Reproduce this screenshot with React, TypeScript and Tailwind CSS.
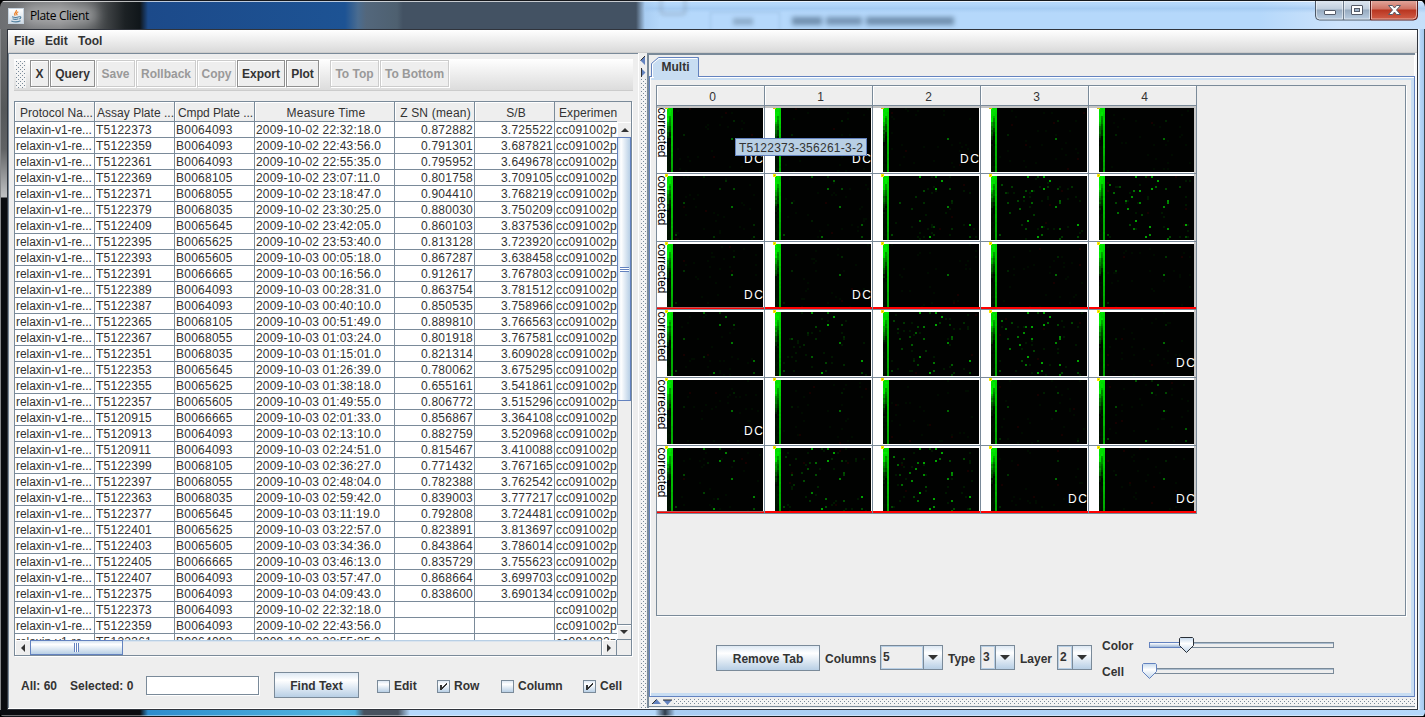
import React from "react";

const ROWS: [string, string, string, string, string][] = [
  ["T5122373", "B0064093", "2009-10-02 22:32:18.0", "0.872882", "3.725522"],
  ["T5122359", "B0064093", "2009-10-02 22:43:56.0", "0.791301", "3.687821"],
  ["T5122361", "B0064093", "2009-10-02 22:55:35.0", "0.795952", "3.649678"],
  ["T5122369", "B0068105", "2009-10-02 23:07:11.0", "0.801758", "3.709105"],
  ["T5122371", "B0068055", "2009-10-02 23:18:47.0", "0.904410", "3.768219"],
  ["T5122379", "B0068035", "2009-10-02 23:30:25.0", "0.880030", "3.750209"],
  ["T5122409", "B0065645", "2009-10-02 23:42:05.0", "0.860103", "3.837536"],
  ["T5122395", "B0065625", "2009-10-02 23:53:40.0", "0.813128", "3.723920"],
  ["T5122393", "B0065605", "2009-10-03 00:05:18.0", "0.867287", "3.638458"],
  ["T5122391", "B0066665", "2009-10-03 00:16:56.0", "0.912617", "3.767803"],
  ["T5122389", "B0064093", "2009-10-03 00:28:31.0", "0.863754", "3.781512"],
  ["T5122387", "B0064093", "2009-10-03 00:40:10.0", "0.850535", "3.758966"],
  ["T5122365", "B0068105", "2009-10-03 00:51:49.0", "0.889810", "3.766563"],
  ["T5122367", "B0068055", "2009-10-03 01:03:24.0", "0.801918", "3.767581"],
  ["T5122351", "B0068035", "2009-10-03 01:15:01.0", "0.821314", "3.609028"],
  ["T5122353", "B0065645", "2009-10-03 01:26:39.0", "0.780062", "3.675295"],
  ["T5122355", "B0065625", "2009-10-03 01:38:18.0", "0.655161", "3.541861"],
  ["T5122357", "B0065605", "2009-10-03 01:49:55.0", "0.806772", "3.515296"],
  ["T5120915", "B0066665", "2009-10-03 02:01:33.0", "0.856867", "3.364108"],
  ["T5120913", "B0064093", "2009-10-03 02:13:10.0", "0.882759", "3.520968"],
  ["T5120911", "B0064093", "2009-10-03 02:24:51.0", "0.815467", "3.410088"],
  ["T5122399", "B0068105", "2009-10-03 02:36:27.0", "0.771432", "3.767165"],
  ["T5122397", "B0068055", "2009-10-03 02:48:04.0", "0.782388", "3.762542"],
  ["T5122363", "B0068035", "2009-10-03 02:59:42.0", "0.839003", "3.777217"],
  ["T5122377", "B0065645", "2009-10-03 03:11:19.0", "0.792808", "3.724481"],
  ["T5122401", "B0065625", "2009-10-03 03:22:57.0", "0.823891", "3.813697"],
  ["T5122403", "B0065605", "2009-10-03 03:34:36.0", "0.843864", "3.786014"],
  ["T5122405", "B0066665", "2009-10-03 03:46:13.0", "0.835729", "3.755623"],
  ["T5122407", "B0064093", "2009-10-03 03:57:47.0", "0.868664", "3.699703"],
  ["T5122375", "B0064093", "2009-10-03 04:09:43.0", "0.838600", "3.690134"],
  ["T5122373", "B0064093", "2009-10-02 22:32:18.0", "", ""],
  ["T5122359", "B0064093", "2009-10-02 22:43:56.0", "", ""],
  ["T5122361", "B0064093", "2009-10-02 22:55:35.0", "", ""],
];

const HEADERS: [string, string][] = [
  ["Protocol Na...", "w-[80px] pl-[5px] tracking-[0.02px]"],
  ["Assay Plate ...", "w-[80px] pl-[2px] tracking-[0.02px]"],
  ["Cmpd Plate ...", "w-[80px] pl-[3px] tracking-[-0.08px]"],
  ["Measure Time", "w-[140px] justify-center pl-[3px] tracking-[0.25px]"],
  ["Z SN (mean)", "w-[80px] justify-center pl-[2px] tracking-[0.18px]"],
  ["S/B", "w-[80px] justify-center pl-[3px]"],
];

// well column, well row, plate activity above which the well lights up
const WELLS: [number, number, number][] = [
  [32, 15, -0.6], [29, 2, 0.15], [26, 6, 0.12], [43, 24, 0.15], [23, 30, 0.12], [18, 0, 0.18], [26, 0, 0.35],
  [8, 13, 0.0], [33, 6, 0.0], [4, 29, 0.05], [43, 30, 0.1], [5, 4, 0.7], [7, 8, 0.75], [9, 18, 0.72],
  [10, 5, 0.75], [13, 12, 0.7], [14, 16, 0.6], [16, 10, 0.6], [17, 7, 0.7], [20, 7, 0.5], [20, 13, 0.6],
  [18, 22, 0.4], [15, 24, 0.78], [17, 26, 0.7], [21, 19, 0.75], [25, 25, 0.5], [25, 29, 0.6], [23, 0, 0.7],
  [28, 5, 0.75], [34, 12, 0.6], [34, 13, 0.65], [34, 26, 0.6], [34, 31, 0.72], [35, 30, 0.78], [40, 5, 0.78],
];

// wells whose signal stays weak even on very active plates
const WEAK = new Set(["8-13", "33-6", "4-29", "43-30", "10-5", "15-24", "21-19", "40-5", "35-30", "23-0"]);

const ACTIVITY: number[][] = [
  [0.05, 0.03, 0, 0.04, 0.04],
  [0.22, 0.42, 0.68, 0.88, 1.05],
  [0.1, 0.06, 0, 0.05, 0.1],
  [0.48, 0.66, 0.86, 1.05, 0.03],
  [0.04, 0.02, 0, 0.14, 0.4],
  [0.55, 0.8, 1.05, 0.1, 0.03],
];

const CONTROL_LABELS = new Set(["0-0", "0-1", "0-2", "2-0", "2-1", "3-4", "4-0", "5-3", "5-4"]);

function random(seed: number) {
  let s = seed * 7919 + 17;
  return () => {
    s = (s * 1103515245 + 12345) % 2147483648;
    return s / 2147483648;
  };
}

function Plate({ row, col }: { row: number; col: number }) {
  const rnd = random(row * 5 + col + 1);
  const level = ACTIVITY[row][col];
  const shapes: React.ReactElement[] = [];
  for (let i = 0; i < 30; i++) {
    const x = 4 + Math.floor(rnd() * 43);
    const y = Math.floor(rnd() * 32);
    const red = rnd() > 0.88;
    shapes.push(<rect key={"n" + i} x={x} y={y} width="1" height="1" fill={red ? "#160000" : level > 0.6 ? "#001800" : "#000c00"} />);
  }
  WELLS.forEach(([x, y, t], i) => {
    if (level <= t) return;
    const cap = WEAK.has(`${x}-${y}`) ? 70 : 165;
    const g = i === 0 ? 105 + level * 30 : Math.min(cap, 25 + (level - t) * 260);
    shapes.push(<rect key={"w" + i} x={x} y={y} width="1" height="1" fill={`rgb(0,${Math.round(g)},0)`} />);
  });
  for (let y = 0; y < 32; y++) {
    const fade = Math.max(0, 1 - Math.max(0, y - 5) / 12);
    const a = y < 7 ? 215 + rnd() * 25 : fade * 200 + rnd() * 50 - 15;
    const b = y < 4 ? 215 + rnd() * 20 : Math.max(0, 1 - (y - 3) / 12) * 170 + rnd() * 35 - 10;
    const c = 215 - y * 1.8 + rnd() * 12;
    [a, b, c].forEach((v, x) => {
      const g = Math.max(8, Math.round(v));
      shapes.push(<rect key={`g${x}-${y}`} x={x} y={y} width="1" height="1" fill={`rgb(0,${y > 18 && x < 2 ? Math.round(12 + rnd() * 8) : g},0)`} />);
    });
  }
  const top = row === 0 ? "bg-[#c4c4c4]" : "bg-white";
  const section = row === 2 || row === 5;
  return (
    <div className="relative h-[67px] w-[107px] shrink-0 overflow-hidden bg-white">
      <div className={"h-[2px] " + top} />
      <div className="h-16 w-[106px] overflow-hidden pl-[10px]">
        <svg width="96" height="64" viewBox="0 0 48 32" shapeRendering="crispEdges">
          <rect width="48" height="32" fill="#010201" />
          {shapes}
        </svg>
      </div>
      <svg className="absolute left-0 top-0" width="107" height="67" shapeRendering="crispEdges">
        {row > 0 && <rect x="8.5" y="0.5" width="2" height="2" fill="#b8b000" stroke="#ffee00" />}
        {row === 0 && <rect x="8" y="2" width="3" height="1" fill="#e0c800" />}
        {col === 4 && <rect x="105" y="0" width="2" height="67" fill="#c8c8c8" />}
        {col === 0 && (
          <text transform="translate(0.5 1.5) rotate(90)" x="0" y="0" textLength="50" className="text-[12px]" fill="#000">corrected</text>
        )}
        {CONTROL_LABELS.has(`${row}-${col}`) && (
          <text x="87" y="57" textLength="19" className="text-[12px]" fill="#fff">DC</text>
        )}
        {section && <rect x="0" y="65" width="107" height="2" fill="#fe0000" />}
        {section && col === 0 && <rect x="0" y="65" width="107" height="1" fill="#c05050" />}
      </svg>
    </div>
  );
}

function Bumps({ id, className }: { id: string; className: string }) {
  return (
    <svg className={className} shapeRendering="crispEdges">
      <defs>
        <pattern id={id} width="4" height="4" patternUnits="userSpaceOnUse">
          <rect width="4" height="4" fill="#f4f4f4" />
          <rect x="0" y="0" width="1" height="1" fill="#7a8a99" />
          <rect x="2" y="2" width="1" height="1" fill="#7a8a99" />
        </pattern>
      </defs>
      <rect width="100%" height="100%" fill={`url(#${id})`} />
    </svg>
  );
}

function ToolButton({ label, size, disabled }: { label: string; size: string; disabled?: boolean }) {
  return (
    <div className={"flex h-[27px] shrink-0 items-center justify-center whitespace-nowrap border bg-[#eeeeee] pt-[2px] shadow-[1px_1px_0_#fff,inset_1px_1px_0_#fff] " + size + (disabled ? " border-[#cccccc] text-[#999999]" : " border-[#8f8f8f] text-[#333333]")}>
      {label}
    </div>
  );
}

function PushButton({ label, className }: { label: string; className: string }) {
  return (
    <div className={"flex shrink-0 items-center justify-center border border-[#7a8a99] bg-linear-to-b from-[#dde8f3] via-white via-30% to-[#b8cfe5] pt-[2px] " + className}>
      {label}
    </div>
  );
}

function Check({ label, checked, className }: { label: string; checked?: boolean; className: string }) {
  return (
    <div className={"flex shrink-0 items-center " + className}>
      <div className="size-[13px] border border-[#7a8a99] bg-linear-to-b from-[#dde8f3] via-white via-30% to-[#b8cfe5]">
        {checked && (
          <svg width="11" height="11" shapeRendering="crispEdges" fill="#333" className="block">
            <rect x="2" y="4" width="2" height="5" />
            <rect x="4" y="6" width="1" height="2" />
            <rect x="5" y="5" width="1" height="2" />
            <rect x="6" y="4" width="1" height="2" />
            <rect x="7" y="3" width="1" height="2" />
            <rect x="8" y="2" width="1" height="2" />
          </svg>
        )}
      </div>
      <span className="pl-[4px] pt-[1px]">{label}</span>
    </div>
  );
}

function Combo({ value, className }: { value: string; className: string }) {
  return (
    <div className={"flex h-[25px] shrink-0 border border-[#7a8a99] " + className}>
      <div className="flex flex-1 items-center border border-[#b8cfe5] pl-[1px]">{value}</div>
      <div className="flex w-[19px] items-center justify-center border-l border-[#7a8a99] bg-linear-to-b from-[#dde8f3] via-white via-30% to-[#b8cfe5]">
        <svg width="10" height="5" fill="#333"><path d="M0 0h10l-5 5z" /></svg>
      </div>
    </div>
  );
}

function Slider({ value, focused }: { value: number; focused?: boolean }) {
  return (
    <div className="relative h-[6px] w-[185px] border border-[#7a8a99] shadow-[inset_0_1px_0_#a9bccf]">
      {value > 0 && <div className="absolute -left-px -top-px h-[6px] border border-[#6382bf] bg-linear-to-b from-white to-[#9fb8d8]" style={{ width: value }} />}
      <svg className="absolute -top-[6px]" style={{ left: value - 8 }} width="16" height="17">
        <defs>
          <linearGradient id="thumb" x2="0" y2="1">
            <stop offset="0" stopColor="#c4d8ec" /><stop offset=".4" stopColor="#fff" /><stop offset="1" stopColor="#c0d5ea" />
          </linearGradient>
        </defs>
        <path d="M1.500 .5h12l1 1v7l-7 7-7-7v-7z" fill="url(#thumb)" stroke={focused ? "#2a2f36" : "#6382bf"} />
      </svg>
    </div>
  );
}

function TitleBar() {
  return (
    <div className="relative flex h-[29px] shrink-0 overflow-hidden border-t border-[#16181c] bg-[linear-gradient(90deg,#6d6f72_0,#7c7d7f_60px,#55585a_95px,#1c2124_125px,#10161a_140px,#1c4a8a_148px,#1d5394_345px,#4a6c90_358px,#53677c_366px,#4e6070_397px,#435263_403px,#435263_636px,#a9cdf2_645px,#b5d8fb_660px,#b5d8fb_1260px,#cde3fb_1340px,#c5dffa_1425px)]">
      <div className="absolute left-0 top-0 h-px w-full bg-white/70" />
      <div className="absolute left-[645px] top-[3px] h-[9px] w-[780px] bg-linear-to-b from-transparent via-[#9cc4ee]/60 to-transparent" />
      <div className="absolute left-[22px] top-[4px] h-5 w-[76px] rounded-full bg-white/35 blur-[6px]" />
      <div className="absolute left-[660px] top-[-6px] h-[20px] w-[26px] rounded border-2 border-[#8092a6]/60 blur-[2px]" />
      <div className="absolute left-[710px] top-[11px] h-[30px] w-[70px] border border-[#86a9cf]/50 blur-[1.5px]" />
      <div className="absolute left-[733px] top-[17px] h-[7px] w-[20px] bg-[#4b6278]/35 blur-[2px]" />
      <div className="absolute left-[792px] top-[16px] flex gap-[4px] blur-[2.5px]">
        <div className="h-[8px] w-[30px] bg-[#37526d]/55" />
        <div className="h-[8px] w-[36px] bg-[#37526d]/50" />
        <div className="h-[8px] w-[88px] bg-[#37526d]/55" />
      </div>
      <div className="relative flex items-center pl-[8px] pt-[1px]">
        <svg width="16" height="16" viewBox="0 0 16 16">
          <defs><linearGradient id="ico" x2="0" y2="1"><stop stopColor="#fff" /><stop offset="1" stopColor="#d0dae4" /></linearGradient></defs>
          <rect x=".5" y=".5" width="15" height="15" fill="url(#ico)" stroke="#c5d2de" />
          <path d="M8.300 2c1.200 1.800-3.400 2.800-1 5.600M10.300 3.800c-2.600 1.200-1.800 2-1 3.400" fill="none" stroke="#ec7d22" strokeWidth="1.200" />
          <path d="M4 8.800c2 .7 5.200.7 7 0M4.600 10.800c1.600.7 4 .7 5.800 0M3.300 13c2.600 1 7 .9 9.200-.2M11 8.800c2.600-.6 2.200 1.800.2 2.200" fill="none" stroke="#4e7d9c" strokeWidth="1.100" />
        </svg>
        <span className="pl-[6px] font-['Open_Sans','Noto_Sans',sans-serif] text-[12px] font-normal leading-4 tracking-[-0.35px] text-black">Plate Client</span>
      </div>
      <svg className="absolute left-[1315px] top-0" width="104" height="20">
        <defs>
          <linearGradient id="cap" x2="0" y2="1"><stop stopColor="#e2eaf3" /><stop offset=".45" stopColor="#c0cedd" /><stop offset=".5" stopColor="#96aabf" /><stop offset="1" stopColor="#bccfe3" /></linearGradient>
          <linearGradient id="close" x2="0" y2="1"><stop stopColor="#e3aaa0" /><stop offset=".45" stopColor="#cf7263" /><stop offset=".5" stopColor="#b93520" /><stop offset="1" stopColor="#d2604a" /></linearGradient>
        </defs>
        <path d="M.5-1v16q0 4 4 4h51V-1z" fill="url(#cap)" stroke="#4d5866" />
        <path d="M55.500-1v20h43q4 0 4-4V-1z" fill="url(#close)" stroke="#561c1c" />
        <path d="M28.500 0v19" stroke="#6c7a8a" />
        <path d="M1.500 0v14q0 4 3 4h23V0M29.500 0v18h25V0M56.500 0v18h41q4 0 4-4V0" fill="none" stroke="#fff" opacity=".5" />
        <rect x="9.500" y="9.500" width="11" height="4" rx=".5" fill="#fff" stroke="#555b68" />
        <rect x="36.500" y="4.500" width="11" height="9" rx=".5" fill="#fff" stroke="#555b68" />
        <rect x="39.500" y="7.500" width="5" height="3" fill="#9fb2c8" stroke="#555b68" />
        <path d="M73.500 4.500h4l2 2.500 2-2.500h4l-4 4.500 4 4.500h-4l-2-2.500-2 2.500h-4l4-4.500z" fill="#fff" stroke="#555b68" />
      </svg>
    </div>
  );
}

function MenuBar() {
  return (
    <div className="flex h-[23px] shrink-0 items-center border-b border-[#cccccc] bg-linear-to-b from-white to-[#dadada] pl-[6px]">
      <span className="w-[31px]">File</span>
      <span className="w-[33px]">Edit</span>
      <span>Tool</span>
    </div>
  );
}

function Toolbar() {
  return (
    <div className="mt-[5px] flex h-[32px] w-[619px] shrink-0 items-start border-b border-[#cccccc] bg-linear-to-b from-white to-[#dcdcdc] pt-px">
      <Bumps id="b1" className="ml-[2px] mt-px mr-[4px] h-[27px] w-[10px]" />
      <ToolButton label="X" size="w-[19px]" />
      <ToolButton label="Query" size="ml-px w-[45px]" />
      <ToolButton label="Save" size="ml-px w-[39px]" disabled />
      <ToolButton label="Rollback" size="ml-px w-[60px]" disabled />
      <ToolButton label="Copy" size="ml-px w-[39px]" disabled />
      <ToolButton label="Export" size="ml-px w-[48px]" />
      <ToolButton label="Plot" size="ml-px w-[33px]" />
      <ToolButton label="To Top" size="ml-[11px] w-[49px]" disabled />
      <ToolButton label="To Bottom" size="ml-px w-[69px]" disabled />
    </div>
  );
}

function DataTable() {
  const line = "border-r border-b border-[#7a8a99]";
  return (
    <div className="mt-[10px] flex h-[555px] w-[618px] shrink-0 flex-col border border-[#7a8a99] font-normal shadow-[1px_1px_0_#fff]">
      <div className="flex h-[538px]">
        <div className="flex w-[602px] flex-col overflow-hidden">
          <div className="flex h-5 shrink-0">
            {HEADERS.map(([label, size]) => (
              <div key={label} className={"flex shrink-0 items-center overflow-hidden whitespace-nowrap pt-[3px] shadow-[inset_1px_1px_0_#fff] " + line + " " + size}>{label}</div>
            ))}
            <div className="flex w-[80px] shrink-0 items-center border-b border-[#7a8a99] pl-[4px] pt-[3px] tracking-[0.1px]">Experiment</div>
          </div>
          <div className="flex-1 overflow-hidden bg-white">
            {ROWS.map((r, i) => (
              <div key={i} className="flex h-4 whitespace-nowrap leading-4">
                <div className={"w-[80px] shrink-0 pl-px tracking-[-0.05px] " + line}>relaxin-v1-re...</div>
                <div className={"w-[80px] shrink-0 pl-px tracking-[0.25px] " + line}>{r[0]}</div>
                <div className={"w-[80px] shrink-0 pl-px tracking-[0.25px] " + line}>{r[1]}</div>
                <div className={"w-[140px] shrink-0 pl-px tracking-[0.17px] " + line}>{r[2]}</div>
                <div className={"w-[80px] shrink-0 pr-px text-right tracking-[0.25px] " + line}>{r[3]}</div>
                <div className={"w-[80px] shrink-0 pr-px text-right tracking-[0.25px] " + line}>{r[4]}</div>
                <div className={"w-[80px] shrink-0 pl-px tracking-[0.25px] " + line}>cc091002p</div>
              </div>
            ))}
          </div>
        </div>
        <div className="flex w-[14px] flex-col pt-5">
          <div className="flex h-[15px] items-center justify-center border-l border-t border-white"><svg width="8" height="4" fill="#333"><path d="M0 4h8l-4-4z" /></svg></div>
          <div className="flex h-[264px] w-[14px] flex-col items-center justify-center border border-[#6382bf] bg-linear-to-r from-[#d4e2f0] via-white via-25% to-[#b8cfe5]">
            <div className="h-px w-[9px] bg-[#6382bf]" /><div className="h-px w-[9px] bg-white" /><div className="h-px w-[9px] bg-[#6382bf]" /><div className="h-px w-[9px] bg-white" /><div className="h-px w-[9px] bg-[#6382bf]" />
          </div>
          <div className="flex-1 border-l border-[#7a8a99]" />
          <div className="flex h-[16px] items-center justify-center border-y border-[#7a8a99] shadow-[inset_1px_1px_0_#fff]"><svg width="8" height="4" fill="#333"><path d="M0 0h8l-4 4z" /></svg></div>
        </div>
      </div>
      <div className="flex h-[15px]">
        <div className="flex w-[15px] items-center justify-center shadow-[inset_1px_1px_0_#fff]"><svg width="4" height="8" fill="#333"><path d="M4 0v8l-4-4z" /></svg></div>
        <div className="flex w-[93px] items-center justify-center border border-[#6382bf] bg-linear-to-b from-[#d4e2f0] via-white via-25% to-[#b8cfe5]">
          <div className="h-[9px] w-px bg-[#6382bf]" /><div className="h-[9px] w-px bg-white" /><div className="h-[9px] w-px bg-[#6382bf]" /><div className="h-[9px] w-px bg-white" /><div className="h-[9px] w-px bg-[#6382bf]" />
        </div>
        <div className="flex-1 border-t border-[#b8cfe5] shadow-[inset_0_1px_0_#dbe4ee]" />
        <div className="flex w-[16px] items-center justify-center border-x border-[#7a8a99] shadow-[inset_1px_1px_0_#fff]"><svg width="4" height="8" fill="#333"><path d="M0 0v8l4-4z" /></svg></div>
        <div className="w-[14px]" />
      </div>
    </div>
  );
}

function LeftPane() {
  return (
    <div className="flex w-[630px] shrink-0 flex-col border-l border-t border-[#7a8a99] pl-[5px]">
      <Toolbar />
      <DataTable />
      <div className="flex h-[52px] items-center pt-[6px] box-content">
        <span className="w-[49px] shrink-0 pl-[7px] pt-[2px] whitespace-nowrap">All: 60</span>
        <span className="w-[83px] shrink-0 pl-[7px] pt-[2px] whitespace-nowrap">Selected: 0</span>
        <div className="h-[19px] w-[113px] shrink-0 border border-[#7a8a99] bg-white shadow-[1px_1px_0_#fff]" />
        <PushButton label="Find Text" className="ml-[15px] h-[26px] w-[85px]" />
        <Check label="Edit" className="ml-[18px] w-[60px] pt-[2px]" />
        <Check label="Row" checked className="w-[64px] pt-[2px]" />
        <Check label="Column" className="w-[82px] pt-[2px]" />
        <Check label="Cell" checked className="pt-[2px]" />
      </div>
    </div>
  );
}

function PlateGrid() {
  return (
    <div className="relative h-[531px] w-[750px] border border-[#7a8a99] font-normal shadow-[1px_1px_0_#fff]">
      <div className="flex h-5 w-[540px] border-b border-[#7a8a99]">
        {[0, 1, 2, 3, 4].map((n) => (
          <div key={n} className="flex w-[108px] items-center justify-center border-r border-[#7a8a99] pt-[3px] pl-[4px] shadow-[inset_1px_1px_0_#fff]">{n}</div>
        ))}
      </div>
      {[0, 1, 2, 3, 4, 5].map((row) => (
        <div key={row} className="flex h-[68px] w-[540px] border-b border-[#7a8a99]">
          {[0, 1, 2, 3, 4].map((col) => (
            <div key={col} className="w-[108px] border-r border-[#7a8a99]"><Plate row={row} col={col} /></div>
          ))}
        </div>
      ))}
      <div className="absolute left-[78px] top-[52px] flex h-[18px] w-[132px] items-center justify-center whitespace-nowrap border border-[#6382bf] bg-[#b8cfe5] pt-[2px] tracking-[0.25px]">T5122373-356261-3-2</div>
    </div>
  );
}

function RightPane() {
  return (
    <div className="flex min-w-0 flex-1 flex-col border-l-2 border-t-2 border-[#7a8a99]">
      <div className="flex h-[21px] w-[766px] shrink-0 items-end border-r border-white pl-[2px]">
        <svg width="49" height="23" className="relative -mb-[2px] z-10">
          <path d="M.5 22V8.500L7.500 2.500H47.500V22" fill="#c8ddf2" stroke="#6382bf" />
          <path d="M1.500 22V9L8 3.500H46" fill="none" stroke="#fff" />
          <path d="M3 10L9 4h38v19H3z" fill="#c8ddf2" />
          <text x="10.500" y="16" className="text-[12px] font-bold" fill="#333">Multi</text>
        </svg>
      </div>
      <div className="flex h-[621px] w-[766px] shrink-0 flex-col border border-[#6382bf] shadow-[inset_1px_1px_0_#fff,inset_0_3px_0_#c8ddf2,inset_-3px_-3px_0_#c8ddf2,inset_1px_0_0_#c8ddf2]">
        <div className="pl-[6px] pt-[8px]"><PlateGrid /></div>
        <div className="flex h-[80px] items-center pl-[66px]">
          <PushButton label="Remove Tab" className="mt-[4px] h-[26px] w-[104px]" />
          <span className="w-[60px] shrink-0 pl-[5px] pt-[6px]">Columns</span>
          <Combo value="5" className="mt-[3px] w-[63px]" />
          <span className="w-[37px] shrink-0 pl-[5px] pt-[6px]">Type</span>
          <Combo value="3" className="mt-[3px] w-[35px]" />
          <span className="w-[42px] shrink-0 pl-[5px] pt-[6px]">Layer</span>
          <Combo value="2" className="mt-[3px] w-[35px]" />
          <div className="flex h-full flex-col pl-[10px] pt-[16px]">
            <div className="flex h-[26px] items-center"><span className="w-[47px] pt-[2px]">Color</span><Slider value={37} focused /></div>
            <div className="flex h-[26px] items-center"><span className="w-[47px] pt-[2px]">Cell</span><Slider value={0} /></div>
          </div>
        </div>
      </div>
      <div className="flex h-[10px] w-[766px] shrink-0 items-center border-b border-[#7a8a99] bg-[#eeeeee] pl-[2px]">
        <svg width="22" height="6" className="shrink-0">
          <path d="M1 5h9L5.500 0zM12 1h9l-4.500 5z" fill="#6382bf" /><path d="M1 5L5.500 .5M12 1h9" stroke="#333" fill="none" />
        </svg>
        <Bumps id="b3" className="ml-[1px] h-[6px] flex-1" />
      </div>
    </div>
  );
}

function SplitDivider() {
  return (
    <div className="flex w-[9px] shrink-0 flex-col items-center border-l border-white bg-[#eeeeee]">
      <svg width="6" height="26" className="shrink-0">
        <path d="M5 3v9L.5 7.500zM1 15v9l4.500-4.500z" fill="#6382bf" /><path d="M5 3L.5 7.500M1.500 15v9" stroke="#333" fill="none" />
      </svg>
      <Bumps id="b2" className="w-[5px] flex-1" />
    </div>
  );
}

export default function App() {
  return (
    <div className="flex h-[717px] w-[1425px] flex-col overflow-hidden bg-black font-['Liberation_Sans',Arial,sans-serif] text-[12px] font-bold leading-[15px] text-[#333333]">
      <div className="flex h-full flex-col overflow-hidden rounded-t-[7px] rounded-b-[5px]">
        <TitleBar />
        <div className="flex h-[681px] shrink-0">
          <div className="w-[7px] border-l border-[#85878a] bg-[linear-gradient(180deg,#6a6c6e_0,#55585a_80px,#606264_120px,#c0c2c4_168px,#0a0c10_169px,#0a0c10_100%)]" />
          <div className="flex w-[1411px] flex-col border border-[#30343c] bg-[#eeeeee]">
            <MenuBar />
            <div className="flex h-[655px] border-r-2 border-[#fafafa]">
              <LeftPane />
              <SplitDivider />
              <RightPane />
            </div>
            <div className="h-px bg-white" />
          </div>
          <div className="w-[7px] border-r border-[#3c4650] bg-linear-to-r from-white via-[#b5d6f7] via-40% to-[#a4c9ee]" />
        </div>
        <div className="h-[7px] border-b border-[#16181c] bg-[linear-gradient(90deg,#0a0c10_0,#0a0c10_140px,#2d8ccc_148px,#55b6e0_340px,#4fb0dc_355px,#48525f_364px,#48525f_398px,#b5d8fb_410px,#b5d8fb_655px,#303d4c_665px,#a9cdf2_675px,#b5d8fb_1425px)] shadow-[inset_0_-1px_0_#ffffff66]" />
      </div>
    </div>
  );
}
